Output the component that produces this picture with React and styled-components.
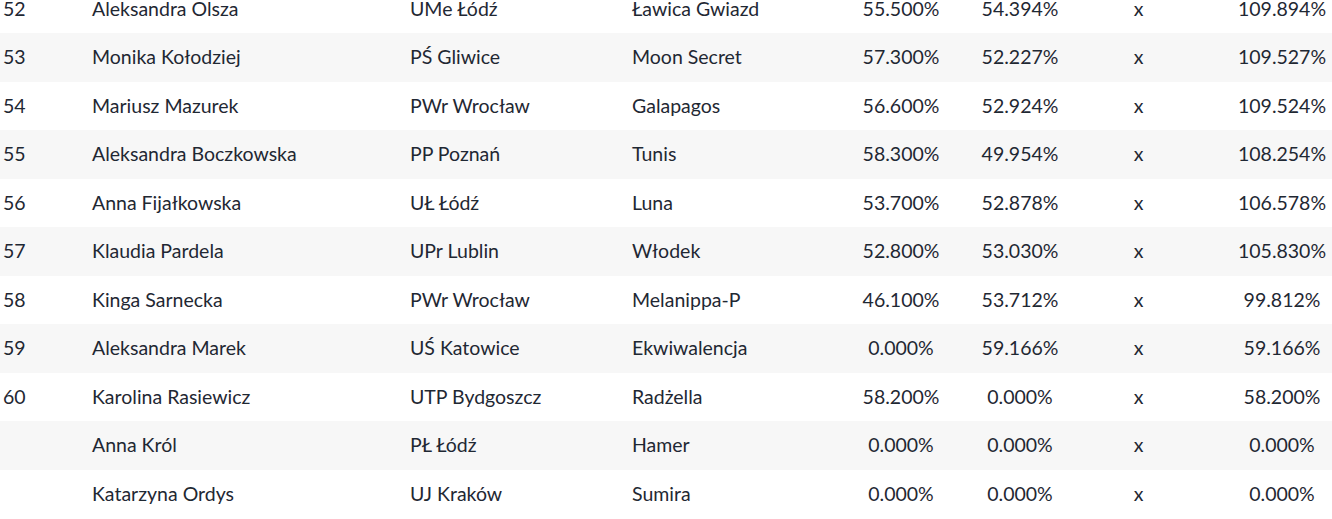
import React from "react";
import styled, { createGlobalStyle } from "styled-components";

const Global = createGlobalStyle`
  html, body { margin: 0; padding: 0; background: #ffffff; overflow: hidden; }
  body { font-family: Lato, "Open Sans", sans-serif; }
`;

const Table = styled.div`
  width: 1332px;
  margin-top: -15.5px;
  color: #1f2833;
  font-family: Lato, sans-serif;
  font-size: 19.5px;
`;

const Row = styled.div`
  display: grid;
  grid-template-columns: 89px 318px 222px 211px 122px 116px 121px 133px;
  height: 48.5px;
  align-items: center;
  background: ${(p) => (p.$striped ? "#f7f7f7" : "#ffffff")};
`;

const Cell = styled.div`
  padding-left: ${(p) => p.$pl ?? 3}px;
  text-align: ${(p) => (p.$center ? "center" : "left")};
  white-space: nowrap;
  line-height: 24px;
`;

const rows = [
  ["52", "Aleksandra Olsza", "UMe Łódź", "Ławica Gwiazd", "55.500%", "54.394%", "109.894%"],
  ["53", "Monika Kołodziej", "PŚ Gliwice", "Moon Secret", "57.300%", "52.227%", "109.527%"],
  ["54", "Mariusz Mazurek", "PWr Wrocław", "Galapagos", "56.600%", "52.924%", "109.524%"],
  ["55", "Aleksandra Boczkowska", "PP Poznań", "Tunis", "58.300%", "49.954%", "108.254%"],
  ["56", "Anna Fijałkowska", "UŁ Łódź", "Luna", "53.700%", "52.878%", "106.578%"],
  ["57", "Klaudia Pardela", "UPr Lublin", "Włodek", "52.800%", "53.030%", "105.830%"],
  ["58", "Kinga Sarnecka", "PWr Wrocław", "Melanippa-P", "46.100%", "53.712%", "99.812%"],
  ["59", "Aleksandra Marek", "UŚ Katowice", "Ekwiwalencja", "0.000%", "59.166%", "59.166%"],
  ["60", "Karolina Rasiewicz", "UTP Bydgoszcz", "Radżella", "58.200%", "0.000%", "58.200%"],
  ["", "Anna Król", "PŁ Łódź", "Hamer", "0.000%", "0.000%", "0.000%"],
  ["", "Katarzyna Ordys", "UJ Kraków", "Sumira", "0.000%", "0.000%", "0.000%"],
];

export default function App() {
  return (
    <>
      <Global />
      <Table>
        {rows.map((r, i) => (
          <Row key={i} $striped={i % 2 === 1}>
            <Cell>{r[0]}</Cell>
            <Cell>{r[1]}</Cell>
            <Cell>{r[2]}</Cell>
            <Cell>{r[3]}</Cell>
            <Cell $center $pl={0}>{r[4]}</Cell>
            <Cell $center $pl={0}>{r[5]}</Cell>
            <Cell $center $pl={0}>x</Cell>
            <Cell $center $pl={33}>{r[6]}</Cell>
          </Row>
        ))}
      </Table>
    </>
  );
}
